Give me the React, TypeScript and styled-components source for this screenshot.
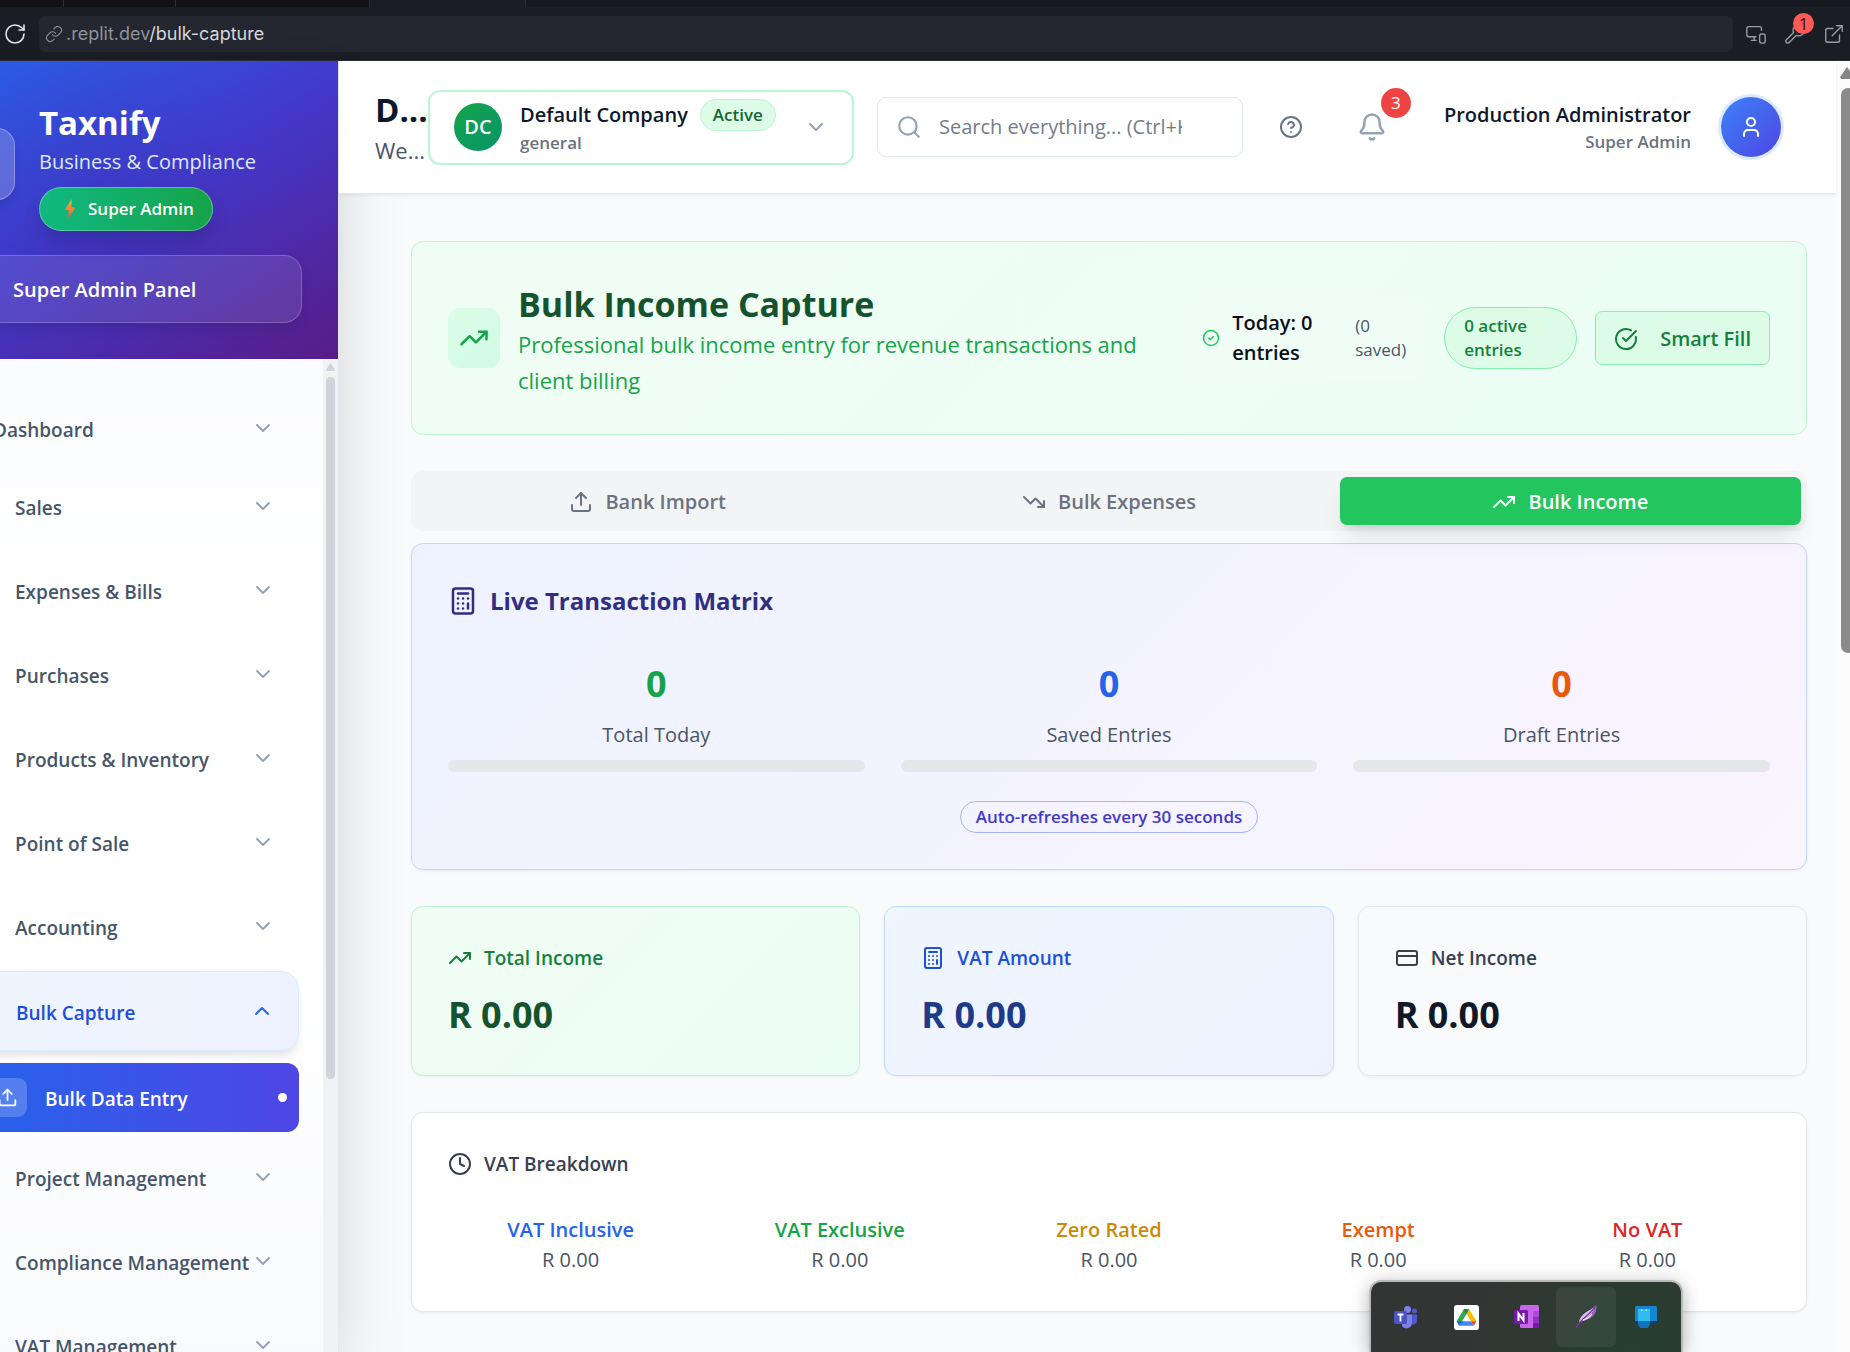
import React from "react";
import styled, { createGlobalStyle, css } from "styled-components";
import {
  Bell,
  Calculator,
  ChevronDown,
  ChevronUp,
  CircleCheck,
  CircleCheckBig,
  CircleQuestionMark,
  Clock,
  CreditCard,
  ExternalLink,
  Link,
  MonitorSmartphone,
  RotateCw,
  Search,
  TrendingDown,
  TrendingUp,
  Upload,
  User,
  Wrench,
} from "lucide-react";

const Global = createGlobalStyle`
  *, *::before, *::after { box-sizing: border-box; }
  body {
    margin: 0;
    font-family: "Open Sans", "Noto Sans", sans-serif;
    font-size: 20px;
    line-height: 30px;
    color: #0f172a;
    background: #f8fafc;
  }
  button, input { font: inherit; color: inherit; }
  button { cursor: pointer; }
  h1, h2, h3, p, ul { margin: 0; padding: 0; }
  ul { list-style: none; }
  svg { flex: none; display: block; }
`;

const Shell = styled.div`
  display: flex;
  flex-direction: column;
  height: 100vh;
  overflow: hidden;
`;

/* ---------- browser chrome ---------- */

const TabStrip = styled.div`
  display: flex;
  flex: none;
  height: 7px;
  background: #171720;
`;

const BrowserTab = styled.div<{ $width: number; $active?: boolean }>`
  width: ${(p) => p.$width}px;
  background: ${(p) => (p.$active ? "#1b1d25" : "#121216")};
  border-right: 1px solid #2a2c36;
`;

const AddressRow = styled.div`
  display: flex;
  align-items: center;
  flex: none;
  gap: 12px;
  height: 54px;
  padding: 0 5px 0 3px;
  background: #1b1d25;
  border-bottom: 1px solid #2b2d37;
`;

const ChromeButton = styled.button`
  position: relative;
  display: flex;
  padding: 0;
  border: 0;
  background: none;
  color: #9a9da6;
`;

const AddressField = styled.div`
  display: flex;
  align-items: center;
  flex: 1;
  gap: 3px;
  height: 36px;
  padding: 0 6px;
  border-radius: 6px;
  background: #24272f;
  color: #8f939c;
  font-family: Inter, "Open Sans", sans-serif;
  font-size: 18px;
`;

const Path = styled.span`
  color: #d6d8dd;
`;

const ChromeTools = styled.div`
  display: flex;
  gap: 17px;
`;

const ToolCount = styled.span`
  position: absolute;
  top: -10px;
  right: -8px;
  width: 21px;
  height: 21px;
  border-radius: 50%;
  background: #ff5a54;
  color: #2a1316;
  font-size: 17px;
  line-height: 21px;
  text-align: center;
`;

const Workspace = styled.div`
  display: flex;
  flex: 1;
  min-height: 0;
`;

/* ---------- sidebar ---------- */

const Sidebar = styled.aside`
  position: relative;
  z-index: 2;
  display: flex;
  flex-direction: column;
  flex: none;
  width: 432px;
  margin-left: -93px;
  border-right: 1px solid #e2e8f0;
  background: #ffffff;
  box-shadow: 0 37px 75px -18px rgba(0, 0, 0, 0.25);
`;

const Brand = styled.div`
  flex: none;
  height: 298px;
  padding: 36px;
  background: radial-gradient(circle at 45% 55%, rgba(49, 46, 170, 0.25), transparent 60%),
    linear-gradient(150deg, #2563eb 0%, #4338ca 50%, #581c87 100%);
  color: #ffffff;
`;

const BrandRow = styled.div`
  display: flex;
  align-items: center;
  gap: 24px;
  height: 134px;
`;

const LogoBox = styled.div`
  flex: none;
  width: 72px;
  height: 72px;
  border: 1px solid rgba(255, 255, 255, 0.3);
  border-radius: 18px;
  background: rgba(255, 255, 255, 0.2);
  box-shadow: 0 6px 9px rgba(0, 0, 0, 0.08);
`;

const BrandText = styled.div`
  display: flex;
  flex-direction: column;
  align-items: flex-start;
  padding-top: 2px;
`;

const BrandName = styled.h1`
  font-size: 33px;
  line-height: 48px;
  font-weight: 700;
`;

const BrandTag = styled.p`
  color: #dbeafe;
  font-weight: 500;
`;

const RoleBadge = styled.span`
  display: flex;
  align-items: center;
  gap: 12px;
  height: 44px;
  margin-top: 10px;
  padding: 0 18px 0 24px;
  border: 1px solid rgba(255, 255, 255, 0.3);
  border-radius: 22px;
  background: linear-gradient(90deg, #10b981, #16a34a);
  box-shadow: 0 12px 18px rgba(0, 0, 0, 0.12);
  font-size: 17px;
  font-weight: 600;
`;

const PanelBox = styled.div`
  display: flex;
  align-items: center;
  height: 68px;
  margin-top: 24px;
  padding: 2px 0 0 69px;
  border: 1px solid rgba(255, 255, 255, 0.2);
  border-radius: 18px;
  background: rgba(255, 255, 255, 0.1);
  box-shadow: 0 6px 12px rgba(0, 0, 0, 0.1);
  font-weight: 600;
`;

const NavArea = styled.div`
  display: flex;
  flex: 1;
  min-height: 0;
  background: linear-gradient(180deg, #fbfcff 0%, #ffffff 25%, #ffffff 60%, #f9fafd 100%);
`;

const Nav = styled.nav`
  flex: 1;
  min-width: 0;
  overflow: hidden;
  padding: 30px 24px 0 36px;
`;

const NavList = styled.ul`
  display: flex;
  flex-direction: column;
  gap: 6px;
`;

const NavEntry = styled.li<{ $first?: boolean }>`
  margin-bottom: ${(p) => (p.$first ? -6 : 0)}px;
`;

const NavButton = styled.button<{ $indent: number; $open?: boolean }>`
  display: flex;
  align-items: center;
  width: 100%;
  height: 78px;
  padding: 0 24px 0 ${(p) => p.$indent}px;
  border: 0;
  background: none;
  color: #475569;
  font-size: 19px;
  font-weight: 600;
  text-align: left;
  white-space: nowrap;
  svg {
    color: #94a3b8;
  }
  ${(p) =>
    p.$open &&
    css`
      height: 80px;
      border: 1px solid #dbeafe;
      border-radius: 18px;
      background: linear-gradient(90deg, #eff6ff, #eef2ff);
      box-shadow: 0 6px 9px -2px rgba(0, 0, 0, 0.12);
      color: #1d4ed8;
      svg {
        color: #2563eb;
      }
    `}
`;

const NavLabel = styled.span`
  flex: 1;
  padding-top: 3px;
`;

const SubLink = styled.a`
  display: flex;
  align-items: center;
  gap: 18px;
  height: 69px;
  margin-top: 12px;
  margin-left: 24px;
  padding: 0 12px 0 21px;
  border-radius: 12px;
  background: linear-gradient(90deg, #2563eb, #4f46e5);
  color: #ffffff;
  font-size: 19px;
  font-weight: 600;
  text-decoration: none;
`;

const SubIcon = styled.span`
  display: flex;
  align-items: center;
  justify-content: center;
  width: 39px;
  height: 39px;
  border-radius: 9px;
  background: rgba(255, 255, 255, 0.2);
`;

const Dot = styled.span`
  width: 9px;
  height: 9px;
  border-radius: 50%;
  background: #ffffff;
`;

const Track = styled.div<{ $page?: boolean }>`
  display: flex;
  flex-direction: column;
  flex: none;
  width: ${(p) => (p.$page ? 14 : 15)}px;
  padding: ${(p) => (p.$page ? "6px 0 0 4px" : "4px 3px 0")};
  background: ${(p) => (p.$page ? "#fbfbfc" : "#f1f2f4")};
  overflow: hidden;
`;

const TrackArrow = styled.span<{ $page?: boolean }>`
  flex: none;
  width: ${(p) => (p.$page ? 14 : 9)}px;
  height: ${(p) => (p.$page ? 12 : 8)}px;
  background: ${(p) => (p.$page ? "#858585" : "#d0d3da")};
  clip-path: polygon(50% 0, 100% 85%, 90% 100%, 10% 100%, 0 85%);
`;

const Thumb = styled.span<{ $page?: boolean }>`
  flex: none;
  width: ${(p) => (p.$page ? 14 : 9)}px;
  height: ${(p) => (p.$page ? "44%" : "71%")};
  margin-top: ${(p) => (p.$page ? 9 : 6)}px;
  margin-left: ${(p) => (p.$page ? 1 : 0)}px;
  border-radius: 7px;
  background: ${(p) => (p.$page ? "#8b8b8b" : "#d0d3da")};
`;

/* ---------- top bar ---------- */

const Main = styled.div`
  display: flex;
  flex-direction: column;
  flex: 1;
  min-width: 0;
`;

const TopBar = styled.header`
  position: relative;
  z-index: 3;
  display: flex;
  align-items: center;
  flex: none;
  height: 133px;
  padding: 0 55px 0 36px;
  border-bottom: 1px solid #e2e8f0;
  background: #ffffff;
  box-shadow: 0 2px 3px rgba(0, 0, 0, 0.05);
`;

const PageHeading = styled.div`
  flex: none;
  width: 53px;
  overflow: hidden;
  padding-top: 2px;
  white-space: nowrap;
  color: #475569;
  font-size: 22px;
  line-height: 36px;
`;

const PageName = styled.h2`
  color: #0f172a;
  font-size: 33px;
  line-height: 44px;
  font-weight: 700;
`;

const Company = styled.button`
  display: flex;
  align-items: center;
  flex: none;
  width: 426px;
  height: 75px;
  padding: 0 24px;
  border: 2px solid #bbf7d0;
  border-radius: 12px;
  background: #ffffff;
  text-align: left;
`;

const Initials = styled.span`
  display: flex;
  align-items: center;
  justify-content: center;
  width: 48px;
  height: 48px;
  margin-right: 18px;
  border-radius: 50%;
  background: linear-gradient(135deg, #16a34a, #059669);
  color: #ffffff;
  font-weight: 600;
`;

const CompanyText = styled.span`
  display: flex;
  flex-direction: column;
  flex: 1;
`;

const CompanyName = styled.span`
  display: flex;
  align-items: center;
  gap: 12px;
  font-size: 20px;
  font-weight: 600;
`;

const Muted = styled.span`
  color: #6b7280;
  font-size: 17px;
  line-height: 24px;
  font-weight: 600;
`;

const Active = styled.span`
  display: flex;
  align-items: center;
  height: 32px;
  padding: 0 12px;
  border: 1px solid #bbf7d0;
  border-radius: 16px;
  background: #dcfce7;
  color: #166534;
  font-size: 17px;
`;

const SearchBox = styled.label`
  display: flex;
  align-items: center;
  flex: 0 1 366px;
  gap: 17px;
  min-width: 0;
  height: 60px;
  margin-left: 23px;
  padding: 0 60px 0 18px;
  border: 1px solid #e2e8f0;
  border-radius: 9px;
  color: #94a3b8;
`;

const SearchInput = styled.input`
  flex: 1;
  min-width: 0;
  padding: 0;
  border: 0;
  outline: 0;
  background: none;
  &::placeholder {
    color: #757c8a;
    opacity: 1;
  }
`;

const TopActions = styled.div`
  display: flex;
  align-items: center;
  flex: none;
  gap: 21px;
  margin-left: auto;
`;

const IconButton = styled.button`
  position: relative;
  display: flex;
  align-items: center;
  justify-content: center;
  width: 60px;
  height: 60px;
  padding: 0;
  border: 0;
  background: none;
  color: #64748b;
`;

const AlertCount = styled.span`
  position: absolute;
  top: -9px;
  right: -9px;
  width: 30px;
  height: 30px;
  border-radius: 50%;
  background: #ef4444;
  color: #ffffff;
  font-size: 17px;
`;

const UserBlock = styled.div`
  display: flex;
  align-items: center;
  gap: 30px;
  margin-left: 21px;
`;

const UserText = styled.div`
  display: flex;
  flex-direction: column;
  align-items: flex-end;
  font-size: 20px;
  font-weight: 600;
  white-space: nowrap;
`;

const Avatar = styled.button`
  display: flex;
  align-items: center;
  justify-content: center;
  width: 60px;
  height: 60px;
  padding: 0;
  border: 0;
  border-radius: 50%;
  background: linear-gradient(135deg, #3b82f6, #4f46e5);
  box-shadow: 0 0 0 3px #dbeafe;
  color: #ffffff;
`;

/* ---------- content ---------- */

const Content = styled.main`
  display: flex;
  flex-direction: column;
  flex: 1;
  min-height: 0;
  overflow: hidden;
  padding: 47px 29px 0 72px;
  background: #f8fafc;
`;

type Tone = "green" | "indigo" | "blue" | "gray" | "white";

const tones: Record<Tone, { edge: string; fill: string; title: string; value: string }> = {
  green: { edge: "#bbf7d0", fill: "linear-gradient(135deg, #f0fdf4, #ecfdf5)", title: "#15803d", value: "#14532d" },
  indigo: { edge: "#c7d2fe", fill: "linear-gradient(135deg, #eef2ff, #faf5ff)", title: "#312e81", value: "#312e81" },
  blue: { edge: "#bfdbfe", fill: "linear-gradient(135deg, #eff6ff, #eef2ff)", title: "#1d4ed8", value: "#1e3a8a" },
  gray: { edge: "#e5e7eb", fill: "linear-gradient(135deg, #f9fafb, #f8fafc)", title: "#374151", value: "#111827" },
  white: { edge: "#e5e7eb", fill: "#ffffff", title: "#374151", value: "#111827" },
};

const Card = styled.section<{ $tone: Tone }>`
  flex: none;
  padding: 36px;
  border: 1px solid ${(p) => tones[p.$tone].edge};
  border-radius: 12px;
  background: ${(p) => tones[p.$tone].fill};
  box-shadow: 0 1px 3px rgba(0, 0, 0, 0.06);
`;

const Hero = styled(Card)`
  display: flex;
  align-items: center;
  gap: 18px;
  min-height: 194px;
  box-shadow: none;
`;

const HeroIcon = styled.span`
  display: flex;
  align-items: center;
  justify-content: center;
  flex: none;
  width: 52px;
  height: 60px;
  border-radius: 12px;
  background: linear-gradient(135deg, #dcfce7, #d1fae5);
  color: #16a34a;
`;

const HeroText = styled.div`
  flex: 1;
  min-width: 0;
  padding-top: 4px;
`;

const HeroTitle = styled.h2`
  color: #14532d;
  font-size: 34px;
  line-height: 44px;
  font-weight: 700;
`;

const HeroLead = styled.p`
  color: #16a34a;
  font-size: 22px;
  line-height: 36px;
`;

const Today = styled.div`
  display: flex;
  align-items: center;
  flex: none;
  gap: 12px;
  width: 241px;
  padding: 12px 17px;
  border-radius: 12px;
  background: #f0fdf6;
  color: #22c55e;
`;

const TodayText = styled.span`
  flex: none;
  width: 111px;
  color: #0a0f1a;
  font-size: 20px;
  font-weight: 600;
`;

const SavedText = styled.span`
  color: #4b5563;
  font-size: 17px;
  line-height: 24px;
`;

const ActivePill = styled.span`
  flex: none;
  width: 133px;
  padding: 6px 19px;
  border: 1px solid #86efac;
  border-radius: 31px;
  background: #dcfce7;
  color: #15803d;
  font-size: 17px;
  line-height: 24px;
  font-weight: 600;
`;

const SmartFill = styled.button`
  display: flex;
  align-items: center;
  flex: none;
  gap: 22px;
  height: 54px;
  padding: 1px 18px 0;
  border: 1px solid #86efac;
  border-radius: 7px;
  background: #dcfce7;
  color: #15803d;
  font-weight: 600;
`;

const Tabs = styled.div`
  display: grid;
  grid-template-columns: repeat(3, 1fr);
  flex: none;
  margin-top: 36px;
  padding: 6px;
  border-radius: 12px;
  background: #f3f4f6;
`;

const Tab = styled.button<{ $active?: boolean }>`
  position: relative;
  display: flex;
  align-items: center;
  justify-content: center;
  gap: 12px;
  height: 48px;
  padding: 2px 0 0;
  border: 0;
  border-radius: 7px;
  background: none;
  color: #6b7280;
  font-weight: 600;
  ${(p) =>
    p.$active &&
    css`
      z-index: 1;
      background: #22c55e;
      color: #ffffff;
      box-shadow: 0 15px 22px -4px rgba(0, 0, 0, 0.1), 0 6px 9px -6px rgba(0, 0, 0, 0.15);
    `}
`;

const Matrix = styled(Card)`
  margin-top: 12px;
`;

const MatrixTitle = styled.h3`
  display: flex;
  align-items: center;
  gap: 12px;
  color: #312e81;
  font-size: 24px;
  line-height: 42px;
  font-weight: 700;
`;

const MatrixGrid = styled.div`
  display: grid;
  grid-template-columns: repeat(3, 1fr);
  gap: 36px;
  margin-top: 35px;
  text-align: center;
`;

const Count = styled.p<{ $color: string }>`
  color: ${(p) => p.$color};
  font-size: 36px;
  line-height: 54px;
  font-weight: 700;
`;

const CountLabel = styled.p`
  margin-top: 9px;
  color: #4b5563;
`;

const Bar = styled.div`
  height: 12px;
  margin-top: 10px;
  border-radius: 6px;
  background: #e5e7eb;
`;

const Refresh = styled.p`
  width: fit-content;
  margin: 29px auto 0;
  padding: 0 15px;
  border: 1px solid #a5b4fc;
  border-radius: 16px;
  color: #4338ca;
  font-size: 17px;
  font-weight: 600;
`;

const Totals = styled.div`
  display: grid;
  grid-template-columns: repeat(3, 1fr);
  flex: none;
  gap: 24px;
  margin-top: 36px;
`;

const CardTitle = styled.h3<{ $tone: Tone }>`
  display: flex;
  align-items: center;
  gap: 12px;
  color: ${(p) => tones[p.$tone].title};
  font-size: 19px;
  font-weight: 600;
`;

const Amount = styled.p<{ $tone: Tone }>`
  margin-top: 18px;
  color: ${(p) => tones[p.$tone].value};
  font-size: 36px;
  line-height: 48px;
  font-weight: 700;
`;

const Breakdown = styled(Card)`
  margin-top: 36px;
`;

const VatGrid = styled.div`
  display: grid;
  grid-template-columns: repeat(5, 1fr);
  gap: 24px;
  margin-top: 36px;
  text-align: center;
`;

const VatName = styled.p<{ $color: string }>`
  color: ${(p) => p.$color};
  font-weight: 600;
`;

const VatValue = styled.p`
  color: #4b5563;
`;

/* ---------- desktop tray flyout ---------- */

const Tray = styled.div`
  position: fixed;
  z-index: 10;
  right: 167px;
  bottom: 0;
  display: flex;
  padding: 5px 5px 5px;
  border: 2px solid #b9bbbb;
  border-bottom: 0;
  border-radius: 12px 12px 0 0;
  background: radial-gradient(circle at 85% 110%, #26402e 0%, #333534 60%);
  box-shadow: 0 3px 18px rgba(0, 0, 0, 0.3);
`;

const TrayItem = styled.button<{ $hover?: boolean }>`
  display: flex;
  align-items: center;
  justify-content: center;
  width: 60px;
  height: 60px;
  padding: 0;
  border: 0;
  border-radius: 6px;
  background: ${(p) => (p.$hover ? "rgba(255, 255, 255, 0.06)" : "none")};
`;

const Bolt = () => (
  <svg width="12" height="20" viewBox="0 0 12 22" aria-hidden="true">
    <defs>
      <linearGradient id="bolt" x1="0" y1="0" x2="0" y2="1">
        <stop offset="0" stopColor="#f9b23c" />
        <stop offset="1" stopColor="#f2543d" />
      </linearGradient>
    </defs>
    <path d="M8 0 0 12h4.500L4 22 12 9H7.500z" fill="url(#bolt)" />
  </svg>
);

const TeamsIcon = () => (
  <svg width="24" height="24" viewBox="0 0 24 24" aria-hidden="true">
    <circle cx="13.500" cy="4.500" r="3.500" fill="#7b83eb" />
    <circle cx="20.500" cy="6" r="2.500" fill="#5059c9" />
    <path d="M17 9.500h6v6.500a3.500 3.500 0 0 1-6 2.500z" fill="#5059c9" />
    <path d="M8 9.500h10v8.500a5.500 5.500 0 0 1-10 3z" fill="#7b83eb" />
    <rect x="0" y="6" width="13" height="13" rx="1.500" fill="#4b53bc" />
    <path d="M3.500 9.500h6M6.500 9.500v7" stroke="#fff" strokeWidth="1.800" />
  </svg>
);

const DriveIcon = () => (
  <svg width="25" height="25" viewBox="0 0 24 24" aria-hidden="true">
    <rect width="24" height="24" rx="3" fill="#fff" />
    <path d="M9.300 4h2.700l2 3.500L6.500 20 2.500 15.500z" fill="#34a853" />
    <path d="M9.300 4h5.400L12 8.700z" fill="#188038" />
    <path d="M14.700 4l6.800 11.500h-5.300L12 8.700z" fill="#fbbc04" />
    <path d="M12 8.700l4.200 6.800H7.800z" fill="#fff" />
    <path d="M7.800 15.500h8.400L19 20H5z" fill="#4285f4" />
    <path d="M2.500 15.500h5.300L5 20z" fill="#1967d2" />
    <path d="M16.200 15.500h5.300L19 20z" fill="#ea4335" />
  </svg>
);

const OneNoteIcon = () => (
  <svg width="25" height="24" viewBox="0 0 25 24" aria-hidden="true">
    <rect x="6" y="0" width="19" height="23" rx="1.500" fill="#ca64ea" />
    <path d="M19 6h6v6h-6z" fill="#ae4bd5" />
    <path d="M19 12h6v6h-6z" fill="#9332bf" />
    <path d="M19 18h6v4a1 1 0 0 1-1 1h-5z" fill="#7719aa" />
    <rect x="0" y="5" width="14" height="14" rx="1.500" fill="#7719aa" />
    <path d="M4.500 16V8.500l5 7V8" fill="none" stroke="#fff" strokeWidth="2" />
  </svg>
);

const FeatherIcon = () => (
  <svg width="22" height="24" viewBox="0 0 22 24" aria-hidden="true">
    <path d="M21 0c1 5-1 10-6 13-3 2-7 2-11 5 0-4 2-7 6-10 4-3 8-4 11-8z" fill="#d9c3ee" />
    <path d="M21 0c1 5-1 10-6 13-3 2-6 2-9 4C13 13 18 8 21 0z" fill="#9b59c9" />
    <path d="M21 0C17 9 6 13 1 23" fill="none" stroke="#7a35a8" strokeWidth="1.400" />
    <path d="M8 15c4-1 7-3 9-6" fill="none" stroke="#f0e4fa" strokeWidth="1.300" />
  </svg>
);

const PhoneIcon = () => (
  <svg width="24" height="22" viewBox="0 0 24 22" aria-hidden="true">
    <rect x="1" y="0" width="22" height="17" rx="1.500" fill="#1587d1" />
    <path d="M0 15h23v2H0z" fill="#0b3f75" />
    <rect x="4" y="3" width="12" height="12" fill="#31bdf0" />
    <path d="M7 3h1.500v2H7zM11.500 3H13v2h-1.500z" fill="#8be6ff" />
    <path d="M4 15h12v3l-2 4H6l-2-4z" fill="#0f73bd" />
  </svg>
);

/* ---------- data ---------- */

const navItems = [
  { label: "Dashboard", indent: 50 },
  { label: "Sales", indent: 72 },
  { label: "Expenses & Bills", indent: 72 },
  { label: "Purchases", indent: 72 },
  { label: "Products & Inventory", indent: 72 },
  { label: "Point of Sale", indent: 72 },
  { label: "Accounting", indent: 72 },
  { label: "Bulk Capture", indent: 72, open: true },
  { label: "Project Management", indent: 72 },
  { label: "Compliance Management", indent: 72 },
  { label: "VAT Management", indent: 72 },
];

const counts = [
  { label: "Total Today", color: "#16a34a" },
  { label: "Saved Entries", color: "#2563eb" },
  { label: "Draft Entries", color: "#ea580c" },
];

const totals: { label: string; tone: Tone; Icon: typeof TrendingUp }[] = [
  { label: "Total Income", tone: "green", Icon: TrendingUp },
  { label: "VAT Amount", tone: "blue", Icon: Calculator },
  { label: "Net Income", tone: "gray", Icon: CreditCard },
];

const vatRows = [
  { label: "VAT Inclusive", color: "#2563eb" },
  { label: "VAT Exclusive", color: "#16a34a" },
  { label: "Zero Rated", color: "#ca8a04" },
  { label: "Exempt", color: "#ea580c" },
  { label: "No VAT", color: "#dc2626" },
];

export default function App() {
  return (
    <Shell>
      <Global />
      <TabStrip>
        <BrowserTab $width={64} />
        <BrowserTab $width={112} />
        <BrowserTab $width={194} />
        <BrowserTab $width={156} $active />
      </TabStrip>
      <AddressRow>
        <ChromeButton aria-label="Reload">
          <RotateCw size={24} strokeWidth={1.6} color="#e3e4e8" />
        </ChromeButton>
        <AddressField>
          <Link size={18} strokeWidth={1.5} />
          <span>
            .replit.dev<Path>/bulk-capture</Path>
          </span>
        </AddressField>
        <ChromeTools>
          <ChromeButton aria-label="Devices">
            <MonitorSmartphone size={22} strokeWidth={1.5} />
          </ChromeButton>
          <ChromeButton aria-label="Developer tools">
            <Wrench size={22} strokeWidth={1.5} />
            <ToolCount>1</ToolCount>
          </ChromeButton>
          <ChromeButton aria-label="Open in new tab">
            <ExternalLink size={22} strokeWidth={1.5} />
          </ChromeButton>
        </ChromeTools>
      </AddressRow>

      <Workspace>
        <Sidebar>
          <Brand>
            <BrandRow>
              <LogoBox />
              <BrandText>
                <BrandName>Taxnify</BrandName>
                <BrandTag>Business &amp; Compliance</BrandTag>
                <RoleBadge>
                  <Bolt />
                  Super Admin
                </RoleBadge>
              </BrandText>
            </BrandRow>
            <PanelBox>Super Admin Panel</PanelBox>
          </Brand>
          <NavArea>
            <Nav>
              <NavList>
                {navItems.map((item, i) => (
                  <NavEntry key={item.label} $first={i === 0}>
                    <NavButton $indent={item.indent} $open={item.open} aria-expanded={!!item.open}>
                      <NavLabel>{item.label}</NavLabel>
                      {item.open ? <ChevronUp size={24} /> : <ChevronDown size={24} />}
                    </NavButton>
                    {item.open && (
                      <SubLink href="#bulk-data-entry">
                        <SubIcon>
                          <Upload size={21} />
                        </SubIcon>
                        <NavLabel>Bulk Data Entry</NavLabel>
                        <Dot />
                      </SubLink>
                    )}
                  </NavEntry>
                ))}
              </NavList>
            </Nav>
            <Track>
              <TrackArrow />
              <Thumb />
            </Track>
          </NavArea>
        </Sidebar>

        <Main>
          <TopBar>
            <PageHeading>
              <PageName>D...</PageName>
              <p>We...</p>
            </PageHeading>
            <Company>
              <Initials>DC</Initials>
              <CompanyText>
                <CompanyName>
                  Default Company <Active>Active</Active>
                </CompanyName>
                <Muted>general</Muted>
              </CompanyText>
              <ChevronDown size={24} color="#94a3b8" />
            </Company>
            <SearchBox>
              <Search size={26} />
              <SearchInput type="text" aria-label="Search" placeholder="Search everything... (Ctrl+K)" />
            </SearchBox>
            <TopActions>
              <IconButton aria-label="Help">
                <CircleQuestionMark size={24} />
              </IconButton>
              <IconButton aria-label="Notifications">
                <Bell size={30} color="#94a3b8" />
                <AlertCount>3</AlertCount>
              </IconButton>
              <UserBlock>
                <UserText>
                  <span>Production Administrator</span>
                  <Muted>Super Admin</Muted>
                </UserText>
                <Avatar aria-label="Account">
                  <User size={24} />
                </Avatar>
              </UserBlock>
            </TopActions>
          </TopBar>

          <Content>
            <Hero $tone="green">
              <HeroIcon>
                <TrendingUp size={30} />
              </HeroIcon>
              <HeroText>
                <HeroTitle>Bulk Income Capture</HeroTitle>
                <HeroLead>Professional bulk income entry for revenue transactions and client billing</HeroLead>
              </HeroText>
              <Today>
                <CircleCheck size={18} />
                <TodayText>Today: 0 entries</TodayText>
                <SavedText>(0 saved)</SavedText>
              </Today>
              <ActivePill>0 active entries</ActivePill>
              <SmartFill>
                <CircleCheckBig size={24} />
                Smart Fill
              </SmartFill>
            </Hero>

            <Tabs role="tablist">
              <Tab role="tab" aria-selected={false}>
                <Upload size={24} />
                Bank Import
              </Tab>
              <Tab role="tab" aria-selected={false}>
                <TrendingDown size={24} />
                Bulk Expenses
              </Tab>
              <Tab role="tab" aria-selected $active>
                <TrendingUp size={24} />
                Bulk Income
              </Tab>
            </Tabs>

            <Matrix $tone="indigo">
              <MatrixTitle>
                <Calculator size={30} />
                Live Transaction Matrix
              </MatrixTitle>
              <MatrixGrid>
                {counts.map((c) => (
                  <div key={c.label}>
                    <Count $color={c.color}>0</Count>
                    <CountLabel>{c.label}</CountLabel>
                    <Bar />
                  </div>
                ))}
              </MatrixGrid>
              <Refresh>Auto-refreshes every 30 seconds</Refresh>
            </Matrix>

            <Totals>
              {totals.map(({ label, tone, Icon }) => (
                <Card key={label} $tone={tone}>
                  <CardTitle $tone={tone}>
                    <Icon size={24} />
                    {label}
                  </CardTitle>
                  <Amount $tone={tone}>R 0.00</Amount>
                </Card>
              ))}
            </Totals>

            <Breakdown $tone="white">
              <CardTitle $tone="white">
                <Clock size={24} />
                VAT Breakdown
              </CardTitle>
              <VatGrid>
                {vatRows.map((v) => (
                  <div key={v.label}>
                    <VatName $color={v.color}>{v.label}</VatName>
                    <VatValue>R 0.00</VatValue>
                  </div>
                ))}
              </VatGrid>
            </Breakdown>
          </Content>
        </Main>
        <Track $page>
          <TrackArrow $page />
          <Thumb $page />
        </Track>
      </Workspace>

      <Tray>
        <TrayItem aria-label="Teams">
          <TeamsIcon />
        </TrayItem>
        <TrayItem aria-label="Drive">
          <DriveIcon />
        </TrayItem>
        <TrayItem aria-label="OneNote">
          <OneNoteIcon />
        </TrayItem>
        <TrayItem aria-label="Feather" $hover>
          <FeatherIcon />
        </TrayItem>
        <TrayItem aria-label="Phone Link">
          <PhoneIcon />
        </TrayItem>
      </Tray>
    </Shell>
  );
}
